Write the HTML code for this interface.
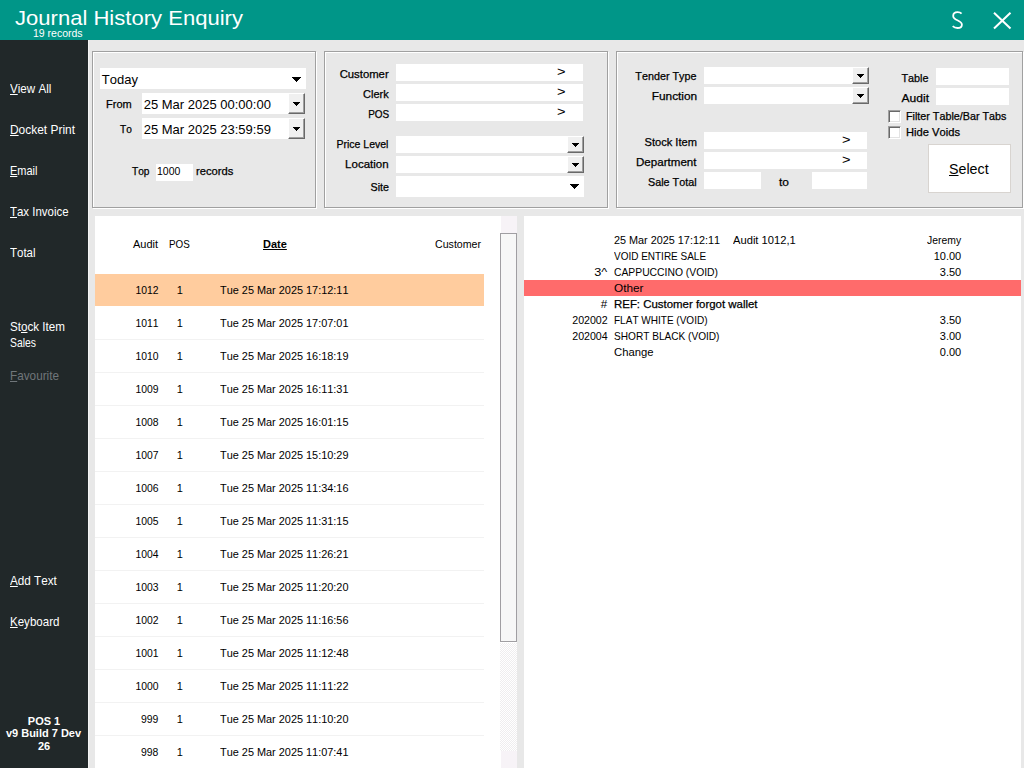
<!DOCTYPE html>
<html>
<head>
<meta charset="utf-8">
<title>Journal History Enquiry</title>
<style>
*{box-sizing:border-box;margin:0;padding:0}
html,body{width:1024px;height:768px;overflow:hidden;background:#e8e8e8;font-family:"Liberation Sans",sans-serif;color:#000}
div,svg{position:absolute}
.t{white-space:pre;font-kerning:none}
u{text-decoration:underline;text-underline-offset:1px;text-decoration-thickness:1px}
.grp{border:1px solid #a0a0a0;box-shadow:1px 1px 0 #fff,inset 1px 1px 0 #fff}
.in{background:#fff}
.btn{background:#f0f0f0;border:1px solid;border-color:#fff #696969 #696969 #fff;box-shadow:inset -1px -1px 0 #a0a0a0}
.ar{width:0;height:0;border-style:solid;border-color:#000 transparent transparent transparent}
.chk{width:13px;height:13px;background:#fff;border:1px solid;border-color:#a0a0a0 #fff #fff #a0a0a0;box-shadow:inset 1px 1px 0 #696969,inset -1px -1px 0 #e3e3e3}
.rl{left:95px;width:389px;height:1px;background:#f2f2f2}

</style>
</head>
<body>
<div style="left:0;top:0;width:1024px;height:40px;background:#009688"></div>
<div style="left:0;top:40px;width:88px;height:728px;background:#212829"></div>
<div style="left:88px;top:40px;width:1px;height:728px;background:#f4f4f4"></div>
<svg style="left:950px;top:9px" width="16" height="22" viewBox="0 0 16 22"><path d="M11.6 4.6 C10.6 3.6 9.2 3.2 7.6 3.2 C5 3.2 3.2 4.8 3.2 6.9 C3.2 9.2 5 10.2 7.4 11.3 C9.9 12.4 11.9 13.3 11.9 15.7 C11.9 17.8 10 19 7.5 19 C5.6 19 3.8 18.3 2.7 17.2" fill="none" stroke="#fff" stroke-width="1.8"/></svg>
<svg style="left:990px;top:9px" width="24" height="24" viewBox="0 0 24 24"><path d="M4 3.7 L20.5 19.5 M20.5 3.7 L4 19.5" fill="none" stroke="#fff" stroke-width="2"/></svg>

<!-- panel 1 -->
<div class="grp" style="left:92px;top:51px;width:224px;height:157px"></div>
<div class="in" style="left:100px;top:68px;width:206px;height:21px"></div>
<div style="left:292px;top:77px;width:9px;height:1px;background:#000"></div><div style="left:293px;top:78px;width:7px;height:1px;background:#000"></div><div style="left:294px;top:79px;width:5px;height:1px;background:#000"></div><div style="left:295px;top:80px;width:3px;height:1px;background:#000"></div><div style="left:296px;top:81px;width:1px;height:1px;background:#000"></div>
<div class="in" style="left:142px;top:93px;width:146px;height:21px"></div>
<div class="btn" style="left:288px;top:93px;width:17px;height:21px"></div>
<div style="left:293px;top:102px;width:7px;height:1px;background:#000"></div><div style="left:294px;top:103px;width:5px;height:1px;background:#000"></div><div style="left:295px;top:104px;width:3px;height:1px;background:#000"></div><div style="left:296px;top:105px;width:1px;height:1px;background:#000"></div>
<div class="in" style="left:142px;top:118px;width:146px;height:21px"></div>
<div class="btn" style="left:288px;top:118px;width:17px;height:21px"></div>
<div style="left:293px;top:127px;width:7px;height:1px;background:#000"></div><div style="left:294px;top:128px;width:5px;height:1px;background:#000"></div><div style="left:295px;top:129px;width:3px;height:1px;background:#000"></div><div style="left:296px;top:130px;width:1px;height:1px;background:#000"></div>
<div class="in" style="left:156px;top:164px;width:37px;height:17px"></div>

<!-- panel 2 -->
<div class="grp" style="left:324px;top:51px;width:284px;height:157px"></div>
<div class="in" style="left:396px;top:64px;width:187px;height:17px"></div>
<div class="in" style="left:396px;top:84px;width:187px;height:17px"></div>
<div class="in" style="left:396px;top:104px;width:187px;height:17px"></div>
<div class="in" style="left:396px;top:136px;width:171px;height:17px"></div>
<div class="btn" style="left:567px;top:136px;width:17px;height:17px"></div>
<div style="left:572px;top:143px;width:7px;height:1px;background:#000"></div><div style="left:573px;top:144px;width:5px;height:1px;background:#000"></div><div style="left:574px;top:145px;width:3px;height:1px;background:#000"></div><div style="left:575px;top:146px;width:1px;height:1px;background:#000"></div>
<div class="in" style="left:396px;top:156px;width:171px;height:17px"></div>
<div class="btn" style="left:567px;top:156px;width:17px;height:17px"></div>
<div style="left:572px;top:163px;width:7px;height:1px;background:#000"></div><div style="left:573px;top:164px;width:5px;height:1px;background:#000"></div><div style="left:574px;top:165px;width:3px;height:1px;background:#000"></div><div style="left:575px;top:166px;width:1px;height:1px;background:#000"></div>
<div class="in" style="left:396px;top:176px;width:188px;height:21px"></div>
<div style="left:570px;top:184px;width:9px;height:1px;background:#000"></div><div style="left:571px;top:185px;width:7px;height:1px;background:#000"></div><div style="left:572px;top:186px;width:5px;height:1px;background:#000"></div><div style="left:573px;top:187px;width:3px;height:1px;background:#000"></div><div style="left:574px;top:188px;width:1px;height:1px;background:#000"></div>

<!-- panel 3 -->
<div class="grp" style="left:616px;top:51px;width:407px;height:157px"></div>
<div class="in" style="left:704px;top:67px;width:148px;height:17px"></div>
<div class="btn" style="left:852px;top:67px;width:17px;height:17px"></div>
<div style="left:857px;top:74px;width:7px;height:1px;background:#000"></div><div style="left:858px;top:75px;width:5px;height:1px;background:#000"></div><div style="left:859px;top:76px;width:3px;height:1px;background:#000"></div><div style="left:860px;top:77px;width:1px;height:1px;background:#000"></div>
<div class="in" style="left:704px;top:87px;width:148px;height:17px"></div>
<div class="btn" style="left:852px;top:87px;width:17px;height:17px"></div>
<div style="left:857px;top:94px;width:7px;height:1px;background:#000"></div><div style="left:858px;top:95px;width:5px;height:1px;background:#000"></div><div style="left:859px;top:96px;width:3px;height:1px;background:#000"></div><div style="left:860px;top:97px;width:1px;height:1px;background:#000"></div>
<div class="in" style="left:704px;top:132px;width:163px;height:17px"></div>
<div class="in" style="left:704px;top:152px;width:163px;height:17px"></div>
<div class="in" style="left:704px;top:172px;width:57px;height:17px"></div>
<div class="in" style="left:812px;top:172px;width:55px;height:17px"></div>
<div class="in" style="left:936px;top:68px;width:73px;height:17px"></div>
<div class="in" style="left:936px;top:88px;width:73px;height:17px"></div>
<div class="chk" style="left:888px;top:110px"></div>
<div class="chk" style="left:888px;top:126px"></div>
<div style="left:928px;top:144px;width:83px;height:49px;background:#fff;border:1px solid #d8d4d0"></div>

<!-- list -->
<div class="in" style="left:95px;top:216px;width:406px;height:552px"></div>
<div style="left:95px;top:274px;width:389px;height:32px;background:#ffcc9e"></div>
<div class="rl" style="top:339px"></div>
<div class="rl" style="top:372px"></div>
<div class="rl" style="top:405px"></div>
<div class="rl" style="top:438px"></div>
<div class="rl" style="top:471px"></div>
<div class="rl" style="top:504px"></div>
<div class="rl" style="top:537px"></div>
<div class="rl" style="top:570px"></div>
<div class="rl" style="top:603px"></div>
<div class="rl" style="top:636px"></div>
<div class="rl" style="top:669px"></div>
<div class="rl" style="top:702px"></div>
<div class="rl" style="top:735px"></div>
<div class="rl" style="top:768px"></div>
<!-- scrollbar -->
<div style="left:501px;top:216px;width:16px;height:552px;background:#f7f3f7"></div>
<div style="left:500px;top:642px;width:17px;height:109px;background:#fff"></div>
<div style="left:500px;top:643px;width:17px;height:108px;background:repeating-conic-gradient(#fff 0 25%,#efedef 0 50%) 0 0/2px 2px"></div>
<div style="left:500px;top:233px;width:17px;height:409px;background:#f7f7f7;border:1px solid #a09ea2"></div>
<!-- receipt -->
<div class="in" style="left:524px;top:216px;width:497px;height:552px"></div>
<div style="left:524px;top:280px;width:497px;height:16px;background:#ff6b6b"></div>

<div class="t" style="left:15.0px;top:6px;font-size:21px;line-height:23px;transform:scaleX(1.05);transform-origin:0 0;color:#fff">Journal History Enquiry</div>
<div class="t" style="left:33.0px;top:27px;font-size:10.5px;line-height:12px;color:#fff">19 records</div>
<div class="t" style="left:10.2px;top:81px;font-size:13px;line-height:15px;transform:scaleX(0.893);transform-origin:0 0;color:#fff"><u>V</u>iew All</div>
<div class="t" style="left:10.2px;top:122px;font-size:13px;line-height:15px;transform:scaleX(0.918);transform-origin:0 0;color:#fff"><u>D</u>ocket Print</div>
<div class="t" style="left:10.2px;top:163px;font-size:13px;line-height:15px;transform:scaleX(0.846);transform-origin:0 0;color:#fff"><u>E</u>mail</div>
<div class="t" style="left:10.2px;top:204px;font-size:13px;line-height:15px;transform:scaleX(0.88);transform-origin:0 0;color:#fff"><u>T</u>ax Invoice</div>
<div class="t" style="left:10.2px;top:245px;font-size:13px;line-height:15px;transform:scaleX(0.882);transform-origin:0 0;color:#fff">Total</div>
<div class="t" style="left:10.2px;top:319px;font-size:13px;line-height:15px;transform:scaleX(0.895);transform-origin:0 0;color:#fff">St<u>o</u>ck Item</div>
<div class="t" style="left:10.2px;top:335px;font-size:13px;line-height:15px;transform:scaleX(0.799);transform-origin:0 0;color:#fff">Sales</div>
<div class="t" style="left:10.2px;top:368px;font-size:13px;line-height:15px;transform:scaleX(0.904);transform-origin:0 0;color:#70767a"><u>F</u>avourite</div>
<div class="t" style="left:10.2px;top:573px;font-size:13px;line-height:15px;transform:scaleX(0.899);transform-origin:0 0;color:#fff"><u>A</u>dd Text</div>
<div class="t" style="left:10.2px;top:614px;font-size:13px;line-height:15px;transform:scaleX(0.888);transform-origin:0 0;color:#fff"><u>K</u>eyboard</div>
<div class="t" style="left:27.8px;top:715px;font-size:11px;line-height:12px;font-weight:bold;color:#fff">POS 1</div>
<div class="t" style="left:5.9px;top:727px;font-size:11px;line-height:12px;font-weight:bold;color:#fff">v9 Build 7 Dev</div>
<div class="t" style="left:37.9px;top:740px;font-size:11px;line-height:12px;font-weight:bold;color:#fff">26</div>
<div class="t" style="left:101.8px;top:72px;font-size:13px;line-height:15px">Today</div>
<div class="t" style="left:106.1px;top:98px;font-size:11px;line-height:12px;-webkit-text-stroke:0.25px">From</div>
<div class="t" style="left:119.0px;top:123px;font-size:11px;line-height:12px;transform:scaleX(0.919);transform-origin:100% 0;-webkit-text-stroke:0.25px">To</div>
<div class="t" style="left:143.7px;top:97px;font-size:13px;line-height:15px">25 Mar 2025 00:00:00</div>
<div class="t" style="left:143.7px;top:122px;font-size:13px;line-height:15px">25 Mar 2025 23:59:59</div>
<div class="t" style="left:131.5px;top:165px;font-size:11px;line-height:12px;transform:scaleX(0.923);transform-origin:0 0;-webkit-text-stroke:0.25px">Top</div>
<div class="t" style="left:156.8px;top:165px;font-size:11px;line-height:12px;transform:scaleX(0.952);transform-origin:0 0">1000</div>
<div class="t" style="left:196.2px;top:165px;font-size:11px;line-height:12px;transform:scaleX(1.017);transform-origin:0 0;-webkit-text-stroke:0.25px">records</div>
<div class="t" style="left:341.1px;top:68px;font-size:11px;line-height:12px;transform:scaleX(1.028);transform-origin:100% 0;-webkit-text-stroke:0.25px">Customer</div>
<div class="t" style="left:363.1px;top:88px;font-size:11px;line-height:12px;-webkit-text-stroke:0.25px">Clerk</div>
<div class="t" style="left:365.6px;top:108px;font-size:11px;line-height:12px;transform:scaleX(0.904);transform-origin:100% 0;-webkit-text-stroke:0.25px">POS</div>
<div class="t" style="left:334.4px;top:138px;font-size:11px;line-height:12px;transform:scaleX(0.955);transform-origin:100% 0;-webkit-text-stroke:0.25px">Price Level</div>
<div class="t" style="left:347.2px;top:158px;font-size:11px;line-height:12px;transform:scaleX(1.046);transform-origin:100% 0;-webkit-text-stroke:0.25px">Location</div>
<div class="t" style="left:369.8px;top:181px;font-size:11px;line-height:12px;transform:scaleX(0.975);transform-origin:100% 0;-webkit-text-stroke:0.25px">Site</div>
<div class="t" style="left:557.0px;top:65px;font-size:12px;line-height:14px;transform:scaleX(1.212);transform-origin:0 0">&gt;</div>
<div class="t" style="left:557.0px;top:85px;font-size:12px;line-height:14px;transform:scaleX(1.212);transform-origin:0 0">&gt;</div>
<div class="t" style="left:557.0px;top:105px;font-size:12px;line-height:14px;transform:scaleX(1.212);transform-origin:0 0">&gt;</div>
<div class="t" style="left:634.4px;top:70px;font-size:11px;line-height:12px;transform:scaleX(0.978);transform-origin:100% 0;-webkit-text-stroke:0.25px">Tender Type</div>
<div class="t" style="left:654.6px;top:90px;font-size:11px;line-height:12px;transform:scaleX(1.078);transform-origin:100% 0;-webkit-text-stroke:0.25px">Function</div>
<div class="t" style="left:644.8px;top:136px;font-size:11px;line-height:12px;transform:scaleX(1.01);transform-origin:100% 0;-webkit-text-stroke:0.25px">Stock Item</div>
<div class="t" style="left:639.3px;top:156px;font-size:11px;line-height:12px;transform:scaleX(1.052);transform-origin:100% 0;-webkit-text-stroke:0.25px">Department</div>
<div class="t" style="left:647.3px;top:176px;font-size:11px;line-height:12px;transform:scaleX(0.979);transform-origin:100% 0;-webkit-text-stroke:0.25px">Sale Total</div>
<div class="t" style="left:779.3px;top:176px;font-size:11px;line-height:12px;transform:scaleX(1.088);transform-origin:0 0;-webkit-text-stroke:0.25px">to</div>
<div class="t" style="left:841.5px;top:133px;font-size:12px;line-height:14px;transform:scaleX(1.212);transform-origin:0 0">&gt;</div>
<div class="t" style="left:841.5px;top:153px;font-size:12px;line-height:14px;transform:scaleX(1.212);transform-origin:0 0">&gt;</div>
<div class="t" style="left:901.3px;top:72px;font-size:11px;line-height:12px;transform:scaleX(0.981);transform-origin:100% 0;-webkit-text-stroke:0.25px">Table</div>
<div class="t" style="left:903.7px;top:92px;font-size:11px;line-height:12px;transform:scaleX(1.097);transform-origin:100% 0;-webkit-text-stroke:0.25px">Audit</div>
<div class="t" style="left:906.0px;top:110px;font-size:11px;line-height:12px;transform:scaleX(0.977);transform-origin:0 0;-webkit-text-stroke:0.25px">Filter Table/Bar Tabs</div>
<div class="t" style="left:906.0px;top:126px;font-size:11px;line-height:12px;transform:scaleX(1.015);transform-origin:0 0;-webkit-text-stroke:0.25px">Hide Voids</div>
<div class="t" style="left:949.3px;top:160px;font-size:15px;line-height:17px;transform:scaleX(0.95);transform-origin:0 0"><u>S</u>elect</div>
<div class="t" style="left:133.0px;top:238px;font-size:11px;line-height:12px">Audit</div>
<div class="t" style="left:169.3px;top:238px;font-size:11px;line-height:12px;transform:scaleX(0.895);transform-origin:0 0">POS</div>
<div class="t" style="left:263.0px;top:238px;font-size:11px;line-height:12px;font-weight:bold"><u>Date</u></div>
<div class="t" style="left:434.8px;top:238px;font-size:11px;line-height:12px;transform:scaleX(0.965);transform-origin:0 0">Customer</div>
<div class="t" style="left:133.5px;top:284px;font-size:11px;line-height:12px;transform:scaleX(0.943);transform-origin:100% 0">1012</div>
<div class="t" style="left:176.8px;top:284px;font-size:11px;line-height:12px">1</div>
<div class="t" style="left:220.3px;top:284px;font-size:11px;line-height:12px;transform:scaleX(0.991);transform-origin:0 0">Tue 25 Mar 2025 17:12:11</div>
<div class="t" style="left:133.5px;top:317px;font-size:11px;line-height:12px;transform:scaleX(0.943);transform-origin:100% 0">1011</div>
<div class="t" style="left:176.8px;top:317px;font-size:11px;line-height:12px">1</div>
<div class="t" style="left:220.3px;top:317px;font-size:11px;line-height:12px;transform:scaleX(0.991);transform-origin:0 0">Tue 25 Mar 2025 17:07:01</div>
<div class="t" style="left:133.5px;top:350px;font-size:11px;line-height:12px;transform:scaleX(0.943);transform-origin:100% 0">1010</div>
<div class="t" style="left:176.8px;top:350px;font-size:11px;line-height:12px">1</div>
<div class="t" style="left:220.3px;top:350px;font-size:11px;line-height:12px;transform:scaleX(0.991);transform-origin:0 0">Tue 25 Mar 2025 16:18:19</div>
<div class="t" style="left:133.5px;top:383px;font-size:11px;line-height:12px;transform:scaleX(0.943);transform-origin:100% 0">1009</div>
<div class="t" style="left:176.8px;top:383px;font-size:11px;line-height:12px">1</div>
<div class="t" style="left:220.3px;top:383px;font-size:11px;line-height:12px;transform:scaleX(0.991);transform-origin:0 0">Tue 25 Mar 2025 16:11:31</div>
<div class="t" style="left:133.5px;top:416px;font-size:11px;line-height:12px;transform:scaleX(0.943);transform-origin:100% 0">1008</div>
<div class="t" style="left:176.8px;top:416px;font-size:11px;line-height:12px">1</div>
<div class="t" style="left:220.3px;top:416px;font-size:11px;line-height:12px;transform:scaleX(0.991);transform-origin:0 0">Tue 25 Mar 2025 16:01:15</div>
<div class="t" style="left:133.5px;top:449px;font-size:11px;line-height:12px;transform:scaleX(0.943);transform-origin:100% 0">1007</div>
<div class="t" style="left:176.8px;top:449px;font-size:11px;line-height:12px">1</div>
<div class="t" style="left:220.3px;top:449px;font-size:11px;line-height:12px;transform:scaleX(0.991);transform-origin:0 0">Tue 25 Mar 2025 15:10:29</div>
<div class="t" style="left:133.5px;top:482px;font-size:11px;line-height:12px;transform:scaleX(0.943);transform-origin:100% 0">1006</div>
<div class="t" style="left:176.8px;top:482px;font-size:11px;line-height:12px">1</div>
<div class="t" style="left:220.3px;top:482px;font-size:11px;line-height:12px;transform:scaleX(0.991);transform-origin:0 0">Tue 25 Mar 2025 11:34:16</div>
<div class="t" style="left:133.5px;top:515px;font-size:11px;line-height:12px;transform:scaleX(0.943);transform-origin:100% 0">1005</div>
<div class="t" style="left:176.8px;top:515px;font-size:11px;line-height:12px">1</div>
<div class="t" style="left:220.3px;top:515px;font-size:11px;line-height:12px;transform:scaleX(0.991);transform-origin:0 0">Tue 25 Mar 2025 11:31:15</div>
<div class="t" style="left:133.5px;top:548px;font-size:11px;line-height:12px;transform:scaleX(0.943);transform-origin:100% 0">1004</div>
<div class="t" style="left:176.8px;top:548px;font-size:11px;line-height:12px">1</div>
<div class="t" style="left:220.3px;top:548px;font-size:11px;line-height:12px;transform:scaleX(0.991);transform-origin:0 0">Tue 25 Mar 2025 11:26:21</div>
<div class="t" style="left:133.5px;top:581px;font-size:11px;line-height:12px;transform:scaleX(0.943);transform-origin:100% 0">1003</div>
<div class="t" style="left:176.8px;top:581px;font-size:11px;line-height:12px">1</div>
<div class="t" style="left:220.3px;top:581px;font-size:11px;line-height:12px;transform:scaleX(0.991);transform-origin:0 0">Tue 25 Mar 2025 11:20:20</div>
<div class="t" style="left:133.5px;top:614px;font-size:11px;line-height:12px;transform:scaleX(0.943);transform-origin:100% 0">1002</div>
<div class="t" style="left:176.8px;top:614px;font-size:11px;line-height:12px">1</div>
<div class="t" style="left:220.3px;top:614px;font-size:11px;line-height:12px;transform:scaleX(0.991);transform-origin:0 0">Tue 25 Mar 2025 11:16:56</div>
<div class="t" style="left:133.5px;top:647px;font-size:11px;line-height:12px;transform:scaleX(0.943);transform-origin:100% 0">1001</div>
<div class="t" style="left:176.8px;top:647px;font-size:11px;line-height:12px">1</div>
<div class="t" style="left:220.3px;top:647px;font-size:11px;line-height:12px;transform:scaleX(0.991);transform-origin:0 0">Tue 25 Mar 2025 11:12:48</div>
<div class="t" style="left:133.5px;top:680px;font-size:11px;line-height:12px;transform:scaleX(0.943);transform-origin:100% 0">1000</div>
<div class="t" style="left:176.8px;top:680px;font-size:11px;line-height:12px">1</div>
<div class="t" style="left:220.3px;top:680px;font-size:11px;line-height:12px;transform:scaleX(0.991);transform-origin:0 0">Tue 25 Mar 2025 11:11:22</div>
<div class="t" style="left:139.6px;top:713px;font-size:11px;line-height:12px;transform:scaleX(0.948);transform-origin:100% 0">999</div>
<div class="t" style="left:176.8px;top:713px;font-size:11px;line-height:12px">1</div>
<div class="t" style="left:220.3px;top:713px;font-size:11px;line-height:12px;transform:scaleX(0.991);transform-origin:0 0">Tue 25 Mar 2025 11:10:20</div>
<div class="t" style="left:139.6px;top:746px;font-size:11px;line-height:12px;transform:scaleX(0.948);transform-origin:100% 0">998</div>
<div class="t" style="left:176.8px;top:746px;font-size:11px;line-height:12px">1</div>
<div class="t" style="left:220.3px;top:746px;font-size:11px;line-height:12px;transform:scaleX(0.991);transform-origin:0 0">Tue 25 Mar 2025 11:07:41</div>
<div class="t" style="left:614.3px;top:234px;font-size:11px;line-height:12px;transform:scaleX(0.985);transform-origin:0 0">25 Mar 2025 17:12:11</div>
<div class="t" style="left:925.1px;top:234px;font-size:11px;line-height:12px;transform:scaleX(0.943);transform-origin:100% 0">Jeremy</div>
<div class="t" style="left:614.3px;top:250px;font-size:11px;line-height:12px;transform:scaleX(0.907);transform-origin:0 0">VOID ENTIRE SALE</div>
<div class="t" style="left:933.7px;top:250px;font-size:11px;line-height:12px">10.00</div>
<div class="t" style="left:596.2px;top:266px;font-size:11px;line-height:12px;transform:scaleX(1.152);transform-origin:100% 0">3^</div>
<div class="t" style="left:614.3px;top:266px;font-size:11px;line-height:12px;transform:scaleX(0.94);transform-origin:0 0">CAPPUCCINO (VOID)</div>
<div class="t" style="left:939.8px;top:266px;font-size:11px;line-height:12px">3.50</div>
<div class="t" style="left:614.3px;top:282px;font-size:11px;line-height:12px;transform:scaleX(1.072);transform-origin:0 0">Other</div>
<div class="t" style="left:601.4px;top:298px;font-size:11px;line-height:12px;transform:scaleX(1.061);transform-origin:100% 0">#</div>
<div class="t" style="left:614.3px;top:298px;font-size:11px;line-height:12px;transform:scaleX(1.039);transform-origin:0 0;-webkit-text-stroke:0.25px">REF: Customer forgot wallet</div>
<div class="t" style="left:570.8px;top:314px;font-size:11px;line-height:12px;transform:scaleX(0.967);transform-origin:100% 0">202002</div>
<div class="t" style="left:614.3px;top:314px;font-size:11px;line-height:12px;transform:scaleX(0.911);transform-origin:0 0">FLAT WHITE (VOID)</div>
<div class="t" style="left:939.8px;top:314px;font-size:11px;line-height:12px">3.50</div>
<div class="t" style="left:570.8px;top:330px;font-size:11px;line-height:12px;transform:scaleX(0.967);transform-origin:100% 0">202004</div>
<div class="t" style="left:614.3px;top:330px;font-size:11px;line-height:12px;transform:scaleX(0.918);transform-origin:0 0">SHORT BLACK (VOID)</div>
<div class="t" style="left:939.8px;top:330px;font-size:11px;line-height:12px">3.00</div>
<div class="t" style="left:614.3px;top:346px;font-size:11px;line-height:12px;transform:scaleX(1.025);transform-origin:0 0">Change</div>
<div class="t" style="left:939.8px;top:346px;font-size:11px;line-height:12px">0.00</div>
<div class="t" style="left:733.3px;top:234px;font-size:11px;line-height:12px;transform:scaleX(1.016);transform-origin:0 0">Audit 1012,1</div>
</body>
</html>
